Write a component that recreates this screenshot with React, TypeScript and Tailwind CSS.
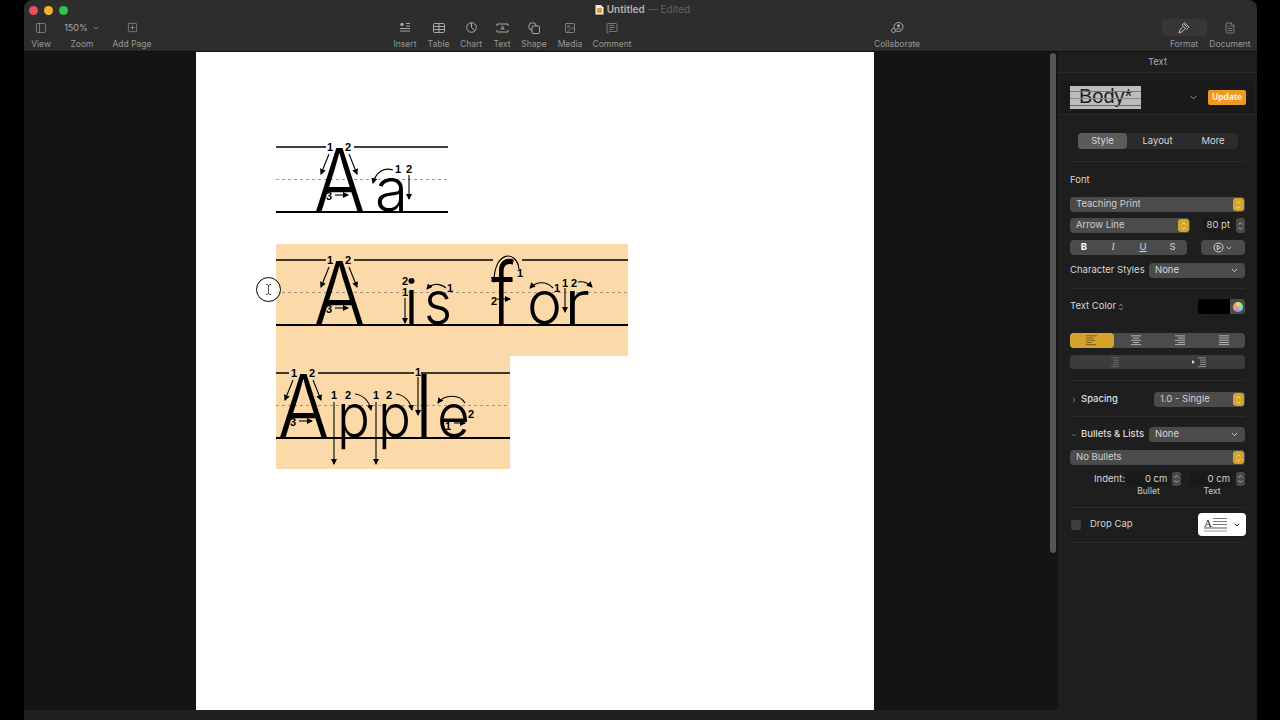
import React from "react";
import { ChevronDown, ChevronUp, ChevronRight, PanelLeft, SquarePlus, Image, MessageSquareText, FileText } from "lucide-react";

type ItemProps = { label: string; w: string; children: React.ReactNode; active?: boolean };

const ToolItem = ({ label, w, children, active }: ItemProps) => (
  <div className={`${w} flex flex-col items-center shrink-0`}>
    <div className={`h-[17px] flex items-center justify-center rounded ${active ? "w-[45px] bg-[#373737]" : ""}`}>{children}</div>
    <span className="mt-[2px] text-[8.5px] leading-[12px] text-[#969696] whitespace-nowrap">{label}</span>
  </div>
);

const Stepper = ({ gold }: { gold?: boolean }) => (
  <div className={`h-full flex flex-col items-center justify-center rounded-[3px] shrink-0 ${gold ? "w-[11px] bg-[#d5a32c] text-[#fbeec8]" : "w-[9px] bg-[#4a4a4a] text-[#d0d0d0]"}`}>
    <ChevronUp size={7} strokeWidth={2.5} className="-mb-[1px]" />
    <ChevronDown size={7} strokeWidth={2.5} className="-mt-[1px]" />
  </div>
);

const GoldSelect = ({ label, w }: { label: string; w: string }) => (
  <div className={`${w} h-full flex items-center rounded-[4px] bg-[#4b4b4b] pl-[6px] pr-[1px] shrink-0`}>
    <span className="flex-1 text-[9.5px] text-[#cfcfcf] whitespace-nowrap">{label}</span>
    <div className="h-[13px]"><Stepper gold /></div>
  </div>
);

const DropSelect = ({ label }: { label: string }) => (
  <div className="w-[96px] h-full flex items-center rounded-[4px] bg-[#4b4b4b] pl-[6px] pr-[6px] shrink-0">
    <span className="flex-1 text-[9.5px] text-[#d6d6d6]">{label}</span>
    <ChevronDown size={9} strokeWidth={2.5} className="text-[#d6d6d6]" />
  </div>
);

const Rule = ({ mt }: { mt: string }) => <div className={`${mt} h-px bg-[#2c2c2c]`} />;

const NumField = ({ value, w }: { value: string; w: string }) => (
  <div className={`${w} h-full flex items-center justify-end pr-[2px] bg-[#1a1a1a] text-[9.5px] text-[#d6d6d6] whitespace-nowrap`}>{value}</div>
);

const AlignIcon = ({ rows, color }: { rows: [number, number][]; color: string }) => (
  <svg width="14" height="11" viewBox="0 0 14 11">
    {rows.map(([x, w], i) => (
      <rect key={i} x={x} y={i * 2.2 + 0.4} width={w} height="0.9" fill={color} />
    ))}
  </svg>
);

const Sidebar = () => (
  <div className="w-[199px] shrink-0 bg-[#1e1e1e] text-[#d6d6d6] font-['Inter',sans-serif]">
    <div className="h-[20px] flex items-center justify-center text-[9.5px] text-[#a8a8a8]">Text</div>
    <div className="h-px bg-[#2c2c2c]" />
    <div className="mx-[3px] mt-[8px] h-[33px] bg-[#1a1a1a] flex items-center rounded-[3px]">
      <div className="relative ml-[9px] w-[71px] h-[23px] bg-[#bdbdbd] overflow-hidden flex items-center pl-[9px] pb-[3px] font-['Liberation_Sans',sans-serif] text-[20px] leading-none text-[#1c1c1c]">
        Body*
        <div className="absolute left-0 right-0 top-[5px] h-px bg-[#777]" />
        <div className="absolute left-0 right-0 top-[12px] h-px bg-[#8a8a8a]" />
        <div className="absolute left-0 right-0 top-[19px] h-[1px] bg-[#666]" />
      </div>
      <ChevronDown size={11} strokeWidth={1.6} className="ml-[47px] text-[#bbb]" />
      <div className="ml-[9px] w-[38px] h-[15px] rounded-[2px] bg-[#ee9a20] flex items-center justify-center text-[8.5px] font-bold text-[#fff3dc]">Update</div>
    </div>
    <div className="h-px bg-[#2c2c2c]" />

    <div className="px-[12px]">
      <div className="mt-[18px] ml-[8px] w-[160px] h-[16px] rounded-[4px] bg-[#2b2b2b] flex text-[9.5px] text-[#d6d6d6]">
        <div className="w-[49px] rounded-[4px] bg-[#5b5b5b] flex items-center justify-center">Style</div>
        <div className="w-[61px] flex items-center justify-center">Layout</div>
        <div className="w-[50px] flex items-center justify-center">More</div>
      </div>
      <Rule mt="mt-[12px]" />
      <div className="mt-[12px] h-[12px] flex items-center text-[9.5px]">Font</div>
      <div className="mt-[11px] h-[15px]"><GoldSelect label="Teaching Print" w="w-[175px]" /></div>
      <div className="mt-[6px] h-[15px] flex items-center">
        <GoldSelect label="Arrow Line" w="w-[120px]" />
        <div className="ml-[13px] w-[29px] h-full"><NumField value="80 pt" w="w-[29px]" /></div>
        <div className="ml-[4px] h-full"><Stepper /></div>
      </div>
      <div className="mt-[7px] h-[15px] flex">
        <div className="w-[117px] h-full rounded-[4px] bg-[#4b4b4b] flex items-center text-[9.5px] text-[#d6d6d6]">
          <span className="w-[28px] text-center font-bold text-white">B</span>
          <span className="w-[30px] text-center italic font-['Liberation_Serif',serif]">I</span>
          <span className="w-[30px] text-center underline">U</span>
          <span className="w-[29px] text-center">S</span>
        </div>
        <div className="ml-[14px] w-[44px] h-full rounded-[4px] bg-[#4b4b4b] flex items-center justify-center gap-[1px]">
          <svg width="11" height="11" viewBox="0 0 11 11" fill="none" stroke="#d6d6d6" strokeWidth="1">
            <circle cx="5.5" cy="5.5" r="4.5" />
            <path d="M4.2 3.2 L7.6 5.5 L4.2 7.8 Z" />
          </svg>
          <ChevronDown size={8} strokeWidth={2.5} />
        </div>
      </div>
      <div className="mt-[8px] h-[15px] flex items-center justify-between">
        <span className="text-[9.5px] whitespace-nowrap">Character Styles</span>
        <DropSelect label="None" />
      </div>
      <Rule mt="mt-[10px]" />
      <div className="mt-[10px] h-[15px] flex items-center">
        <span className="text-[9.5px] whitespace-nowrap">Text Color</span>
        <div className="ml-[2px] flex flex-col items-center">
          <ChevronUp size={6} strokeWidth={2.5} className="-mb-[1px]" />
          <ChevronDown size={6} strokeWidth={2.5} className="-mt-[1px]" />
        </div>
        <div className="ml-auto w-[47px] h-full flex rounded-[3px] overflow-hidden">
          <div className="w-[32px] bg-black" />
          <div className="flex-1 bg-[#4b4b4b] flex items-center justify-center">
            <div className="w-[10px] h-[10px] rounded-full bg-[conic-gradient(#f5d76e,#8fe08a,#7fd4ee,#a58cf0,#f08cc0,#f5a060,#f5d76e)]" />
          </div>
        </div>
      </div>
      <div className="mt-[19px] h-[15px] rounded-[4px] bg-[#4b4b4b] flex">
        <div className="w-[44px] rounded-[4px] bg-[#d5a32c] flex items-center justify-center">
          <AlignIcon color="#7a5a10" rows={[[1, 11], [1, 7], [1, 9], [1, 6], [1, 10]]} />
        </div>
        <div className="w-[44px] flex items-center justify-center">
          <AlignIcon color="#bdbdbd" rows={[[2, 10], [4, 6], [2, 10], [4, 6], [2, 10]]} />
        </div>
        <div className="w-[44px] flex items-center justify-center">
          <AlignIcon color="#bdbdbd" rows={[[2, 10], [5, 7], [2, 10], [5, 7], [2, 10]]} />
        </div>
        <div className="w-[43px] flex items-center justify-center">
          <AlignIcon color="#bdbdbd" rows={[[2, 10], [2, 10], [2, 10], [2, 10], [2, 10]]} />
        </div>
      </div>
      <div className="mt-[7px] h-[14px] rounded-[4px] bg-[#3c3c3c] flex">
        <div className="w-[87px] flex items-center justify-center gap-[1px]">
          <AlignIcon color="#6c6c6c" rows={[[4, 8], [6, 6], [6, 6], [6, 6], [4, 8]]} />
        </div>
        <div className="w-[88px] flex items-center justify-center gap-[1px]">
          <div className="w-0 h-0 border-y-[2px] border-y-transparent border-l-[3px] border-l-[#cfcfcf]" />
          <AlignIcon color="#9a9a9a" rows={[[2, 8], [4, 6], [4, 6], [4, 6], [2, 8]]} />
        </div>
      </div>
      <Rule mt="mt-[11px]" />
      <div className="mt-[11px] h-[15px] flex items-center">
        <ChevronRight size={8} strokeWidth={2} className="text-[#8a8a8a]" />
        <span className="ml-[3px] text-[9.5px] font-medium text-[#dedede]">Spacing</span>
        <div className="ml-auto h-full"><GoldSelect label="1.0 - Single" w="w-[91px]" /></div>
      </div>
      <Rule mt="mt-[9px]" />
      <div className="mt-[10px] h-[15px] flex items-center">
        <ChevronDown size={8} strokeWidth={2} className="text-[#8a8a8a]" />
        <span className="ml-[3px] text-[9.5px] font-medium text-[#dedede] whitespace-nowrap">{"Bullets & Lists"}</span>
        <div className="ml-auto h-full"><DropSelect label="None" /></div>
      </div>
      <div className="mt-[8px] h-[15px]"><GoldSelect label="No Bullets" w="w-[175px]" /></div>
      <div className="mt-[7px] h-[14px] flex items-center">
        <span className="ml-[24px] w-[33px] text-[9.5px] whitespace-nowrap">Indent:</span>
        <NumField value="0 cm" w="ml-[0px] w-[43px]" />
        <div className="ml-[3px] h-full"><Stepper /></div>
        <NumField value="0 cm" w="ml-[9px] w-[42px]" />
        <div className="ml-[4px] h-full"><Stepper /></div>
      </div>
      <div className="h-[11px] flex items-center text-[8.5px] text-[#c8c8c8]">
        <span className="ml-[57px] w-[43px] text-center">Bullet</span>
        <span className="ml-[21px] w-[42px] text-center">Text</span>
      </div>
      <Rule mt="mt-[10px]" />
      <div className="mt-[5px] h-[23px] flex items-center">
        <div className="ml-[1px] w-[10px] h-[10px] rounded-[2px] bg-[#3f3f3f]" />
        <span className="ml-[9px] text-[9.5px] whitespace-nowrap">Drop Cap</span>
        <div className="ml-auto -mr-[1px] w-[48px] h-full rounded-[4px] bg-white flex items-center pl-[6px] gap-[5px]">
          <svg width="24" height="16" viewBox="0 0 24 16">
            <text x="0" y="9.5" fontSize="11" fill="#222" className="font-['Liberation_Serif',serif]">A</text>
            <rect x="9" y="1" width="14" height="1" fill="#777" />
            <rect x="9" y="4" width="14" height="1" fill="#777" />
            <rect x="9" y="7" width="14" height="1" fill="#777" />
            <rect x="0" y="10.5" width="23" height="1" fill="#555" />
            <rect x="0" y="13.5" width="23" height="1" fill="#999" />
          </svg>
          <ChevronDown size={8} strokeWidth={3} className="text-[#222]" />
        </div>
      </div>
      <Rule mt="mt-[6px]" />
    </div>
  </div>
);

const Toolbar = () => (
  <div className="h-[52px] shrink-0 bg-[#2d2d2d] border-b border-b-[#0e0e0e] rounded-tl-[8px] rounded-tr-[8px] font-['Inter',sans-serif]">
    <div className="h-[19px] grid grid-cols-[1fr_auto_1fr] items-center pt-[1px]">
      <div className="flex items-center gap-[6px] pl-[5px]">
        <div className="w-[9px] h-[9px] rounded-full bg-[#ec4f5a]" />
        <div className="w-[9px] h-[9px] rounded-full bg-[#f2b32e]" />
        <div className="w-[9px] h-[9px] rounded-full bg-[#2fc44c]" />
      </div>
      <div className="ml-[4px] -mt-[2px] flex items-center gap-[3px] text-[10px] whitespace-nowrap">
        <svg width="9" height="11" viewBox="0 0 9 11">
          <path d="M0.5 1 H6 L8.5 3.5 V10.5 H0.5 Z" fill="#f4f0e4" />
          <rect x="2" y="4" width="5" height="5" rx="1" fill="#e39a3a" />
        </svg>
        <span className="font-semibold text-[#b4b4b4]">Untitled</span>
        <span className="text-[#626262]">— Edited</span>
      </div>
      <div />
    </div>
    <div className="h-[32px] flex">
      <ToolItem label="View" w="w-[34px]"><PanelLeft size={12} strokeWidth={1.2} className="text-[#a8a8a8]" /></ToolItem>
      <ToolItem label="Zoom" w="w-[48px]">
        <div className="flex items-center gap-[4px] text-[9px] text-[#a8a8a8]">150%<ChevronDown size={8} strokeWidth={2.2} /></div>
      </ToolItem>
      <ToolItem label="Add Page" w="w-[52px]"><SquarePlus size={11} strokeWidth={1.3} className="text-[#a8a8a8]" /></ToolItem>

      <div className="ml-[230px] flex">
        <ToolItem label="Insert" w="w-[34px]">
          <svg width="12" height="11" viewBox="0 0 12 11" fill="none" stroke="#a8a8a8">
            <circle cx="3" cy="2.5" r="1.7" fill="#a8a8a8" stroke="none" />
            <path d="M7 1.5 H11 M7 4 H11 M1 6.5 H11 M1 9 H11" strokeWidth="1" />
          </svg>
        </ToolItem>
        <ToolItem label="Table" w="w-[33px]">
          <svg width="12" height="10" viewBox="0 0 12 10" fill="none" stroke="#a8a8a8" strokeWidth="1">
            <rect x="0.5" y="0.5" width="11" height="9" rx="1" />
            <path d="M0.5 3.5 H11.5 M0.5 6.5 H11.5 M6 0.5 V9.5" />
          </svg>
        </ToolItem>
        <ToolItem label="Chart" w="w-[32px]">
          <svg width="11" height="11" viewBox="0 0 11 11" fill="none" stroke="#a8a8a8" strokeWidth="1">
            <circle cx="5.5" cy="5.5" r="4.8" />
            <path d="M5.5 0.7 V5.5 L8.8 8.8" />
          </svg>
        </ToolItem>
        <ToolItem label="Text" w="w-[30px]">
          <svg width="13" height="10" viewBox="0 0 13 10" fill="none" stroke="#a8a8a8" strokeWidth="1">
            <path d="M1 3 V1 H3 M10 1 H12 V3 M12 7 V9 H10 M3 9 H1 V7 M3 1 H10 M3 9 H10" />
            <path d="M4.8 7 L6.5 2.8 L8.2 7 M5.4 5.6 H7.6" strokeWidth="0.8" />
          </svg>
        </ToolItem>
        <ToolItem label="Shape" w="w-[34px]">
          <svg width="12" height="12" viewBox="0 0 12 12" fill="none" stroke="#a8a8a8" strokeWidth="1">
            <circle cx="4.5" cy="4.5" r="3.8" />
            <rect x="4" y="4" width="7.5" height="7.5" rx="1" fill="#2d2d2d" />
          </svg>
        </ToolItem>
        <ToolItem label="Media" w="w-[38px]"><Image size={12} strokeWidth={1.3} className="text-[#a8a8a8]" /></ToolItem>
        <ToolItem label="Comment" w="w-[46px]"><MessageSquareText size={12} strokeWidth={1.2} className="text-[#a8a8a8]" /></ToolItem>
      </div>

      <div className="ml-[232px]">
        <ToolItem label="Collaborate" w="w-[60px]">
          <svg width="13" height="12" viewBox="0 0 13 12" fill="none" stroke="#a8a8a8" strokeWidth="1">
            <circle cx="7.5" cy="5" r="4.5" />
            <circle cx="7.5" cy="3.8" r="1.5" fill="#a8a8a8" stroke="none" />
            <path d="M5 8 C5.5 6 9.5 6 10 8" />
            <circle cx="2.5" cy="8.5" r="2" fill="#2d2d2d" />
          </svg>
        </ToolItem>
      </div>
      <div className="ml-[234px] flex">
        <ToolItem label="Format" w="w-[46px]" active>
          <svg width="12" height="12" viewBox="0 0 12 12" fill="none" stroke="#bcbcbc" strokeWidth="1">
            <path d="M6.5 0.8 L11 5 L8.5 7.5 L4 3.2 Z" />
            <path d="M4.5 5 L2 8 L1 11 L4 9.8 L6.8 7" />
            <path d="M6 2 L9 5" />
          </svg>
        </ToolItem>
        <ToolItem label="Document" w="w-[46px]"><FileText size={12} strokeWidth={1.2} className="text-[#a8a8a8]" /></ToolItem>
      </div>
    </div>
  </div>
);

// handwriting guide bits, coordinates are page coordinates through the viewBox
type Pt = { x1: number; y1: number; x2: number; y2: number };

const Arrow = ({ x1, y1, x2, y2 }: Pt) => (
  <line x1={x1} y1={y1} x2={x2} y2={y2} stroke="#000" strokeWidth="1.1" markerEnd="url(#head)" />
);

const Arc = ({ d }: { d: string }) => <path d={d} fill="none" stroke="#000" strokeWidth="1.1" markerEnd="url(#head)" />;

const Num = ({ x, y, n }: { x: number; y: number; n: string }) => (
  <text x={x} y={y + 3.5} textAnchor="middle" fontSize="11" fontWeight="700" fill="#000" className="font-['Liberation_Sans',sans-serif]">{n}</text>
);

const Glyph = ({ x, y, w, size, c }: { x: number; y: number; w: number; size: number; c: string }) => (
  <text x={x} y={y} fontSize={size} fontWeight="300" textLength={w} lengthAdjust="spacingAndGlyphs" fill="#000" className="font-['Inter',sans-serif]">{c}</text>
);

const BigA = ({ dx, base }: { dx: number; base: number }) => (
  <g>
    <Glyph x={314 + dx} y={base} w={51} size={86} c="A" />
    <Num x={330 + dx} y={base - 64} n="1" />
    <Num x={348 + dx} y={base - 64} n="2" />
    <Arrow x1={329 + dx} y1={base - 57} x2={321 + dx} y2={base - 37} />
    <Arrow x1={349 + dx} y1={base - 57} x2={357 + dx} y2={base - 37} />
    <Num x={329 + dx} y={base - 15} n="3" />
    <Arrow x1={335 + dx} y1={base - 16} x2={348 + dx} y2={base - 16} />
  </g>
);

type GuideProps = { left: number; top: number; w: number; shift?: number; tops: [number, number][]; children: React.ReactNode };

const Guide = ({ left, top, w, shift = 0, tops, children }: GuideProps) => (
  <svg width={w} height={113} viewBox={`${left} ${top} ${w} 113`} className="block overflow-visible">
    <defs>
      <marker id="head" markerWidth="6" markerHeight="6" refX="5" refY="3" orient="auto" markerUnits="userSpaceOnUse">
        <path d="M0 0 L6 3 L0 6 Z" fill="#000" />
      </marker>
    </defs>
    {tops.map(([a, b]) => (
      <line key={a} x1={a} x2={b} y1={top + shift + 16} y2={top + shift + 16} stroke="#000" strokeWidth="1.5" />
    ))}
    <line x1={left} x2={left + w} y1={top + shift + 48.5} y2={top + shift + 48.5} stroke="#8a8078" strokeWidth="0.8" strokeDasharray="3 3" />
    <line x1={left} x2={left + w} y1={top + shift + 81} y2={top + shift + 81} stroke="#000" strokeWidth="2" />
    {children}
  </svg>
);

const Page = () => (
  <div className="ml-[172px] w-[678px] h-[658px] bg-white pl-[80px] pt-[79px] shrink-0">
    <Guide left={276} top={131} w={172} tops={[[276, 326], [354, 448]]}>
      <BigA dx={0} base={211} />
      <Glyph x={375} y={211} w={33} size={60} c="a" />
      <Num x={398} y={169} n="1" />
      <Num x={409} y={169} n="2" />
      <Arc d="M393 170 C384 167 376 172 373 183" />
      <Arrow x1={409} y1={175} x2={409} y2={199} />
    </Guide>

    <div className="relative w-[352px] h-[112px] bg-[#fbd9a9]">
      <Guide left={276} top={244} w={352} tops={[[276, 326], [354, 493], [522, 628]]}>
        <BigA dx={0} base={324} />
        <Glyph x={404} y={324} w={15} size={62} c="i" />
        <Num x={405} y={281} n="2" />
        <Num x={405} y={292} n="1" />
        <Arrow x1={405} y1={298} x2={405} y2={323} />
        <Glyph x={424} y={324} w={28} size={60} c="s" />
        <Arc d="M446 288 C440 283 432 283 427 289" />
        <Num x={450} y={288} n="1" />
        <Glyph x={491} y={324} w={24} size={86} c="f" />
        <Arc d="M519 269 C517 250 494 250 494 282" />
        <Num x={520} y={273} n="1" />
        <Num x={494} y={301} n="2" />
        <Arrow x1={497} y1={299} x2={510} y2={299} />
        <Glyph x={527} y={324} w={35} size={60} c="o" />
        <Arc d="M553 288 C546 281 537 281 530 288" />
        <Num x={557} y={288} n="1" />
        <Glyph x={564} y={324} w={26} size={60} c="r" />
        <Num x={565} y={283} n="1" />
        <Num x={574} y={283} n="2" />
        <Arrow x1={565} y1={288} x2={565} y2={312} />
        <Arc d="M578 282 C583 281 588 283 592 287" />
      </Guide>
      <div className="absolute left-[-20px] top-[33px] w-[25px] h-[25px] rounded-full border border-black bg-white/80 flex items-center justify-center">
        <svg width="7" height="11" viewBox="0 0 7 11" fill="none" stroke="#333" strokeWidth="0.9">
          <path d="M1 0.5 C2.5 0.5 3.5 1 3.5 2 V9 C3.5 10 2.5 10.5 1 10.5 M6 0.5 C4.5 0.5 3.5 1 3.5 2 M3.5 9 C3.5 10 4.5 10.5 6 10.5" />
        </svg>
      </div>
    </div>

    <div className="w-[234px] h-[113px] bg-[#fbd9a9]">
      <Guide left={276} top={356} w={234} shift={1} tops={[[276, 289], [318, 414], [421, 510]]}>
        <BigA dx={-36} base={437} />
        <Glyph x={337} y={437} w={33} size={60} c="p" />
        <Num x={334} y={395} n="1" />
        <Num x={348} y={395} n="2" />
        <Arrow x1={334} y1={402} x2={334} y2={464} />
        <Arc d="M355 394 C363 395 369 401 371 410" />
        <Glyph x={378} y={437} w={33} size={60} c="p" />
        <Num x={376} y={395} n="1" />
        <Num x={389} y={395} n="2" />
        <Arrow x1={376} y1={402} x2={376} y2={464} />
        <Arc d="M396 394 C404 395 410 401 412 410" />
        <Glyph x={415} y={437} w={18} size={86} c="l" />
        <Num x={418} y={372} n="1" />
        <Arrow x1={418} y1={377} x2={418} y2={415} />
        <Glyph x={437} y={437} w={33} size={60} c="e" />
        <Arc d="M465 403 C460 394 444 394 438 403" />
        <Num x={471} y={414} n="2" />
        <Num x={448} y={426} n="1" />
        <Arrow x1={454} y1={423} x2={465} y2={423} />
      </Guide>
    </div>
  </div>
);

export default function App() {
  return (
    <div className="w-[1280px] h-[720px] overflow-hidden bg-black flex pl-[24px] pr-[23px] font-['Inter',sans-serif]">
      <div className="flex-1 flex flex-col min-w-0">
        <Toolbar />
        <div className="flex-1 flex min-h-0">
          <div className="relative flex-1 bg-[#141414] flex flex-col">
            <div className="flex-1"><Page /></div>
            <div className="h-[10px] bg-[#202020]" />
            <div className="absolute left-[1026px] top-[1px] w-[6px] h-[500px] rounded-full bg-[#555]" />
          </div>
          <Sidebar />
        </div>
      </div>
    </div>
  );
}
